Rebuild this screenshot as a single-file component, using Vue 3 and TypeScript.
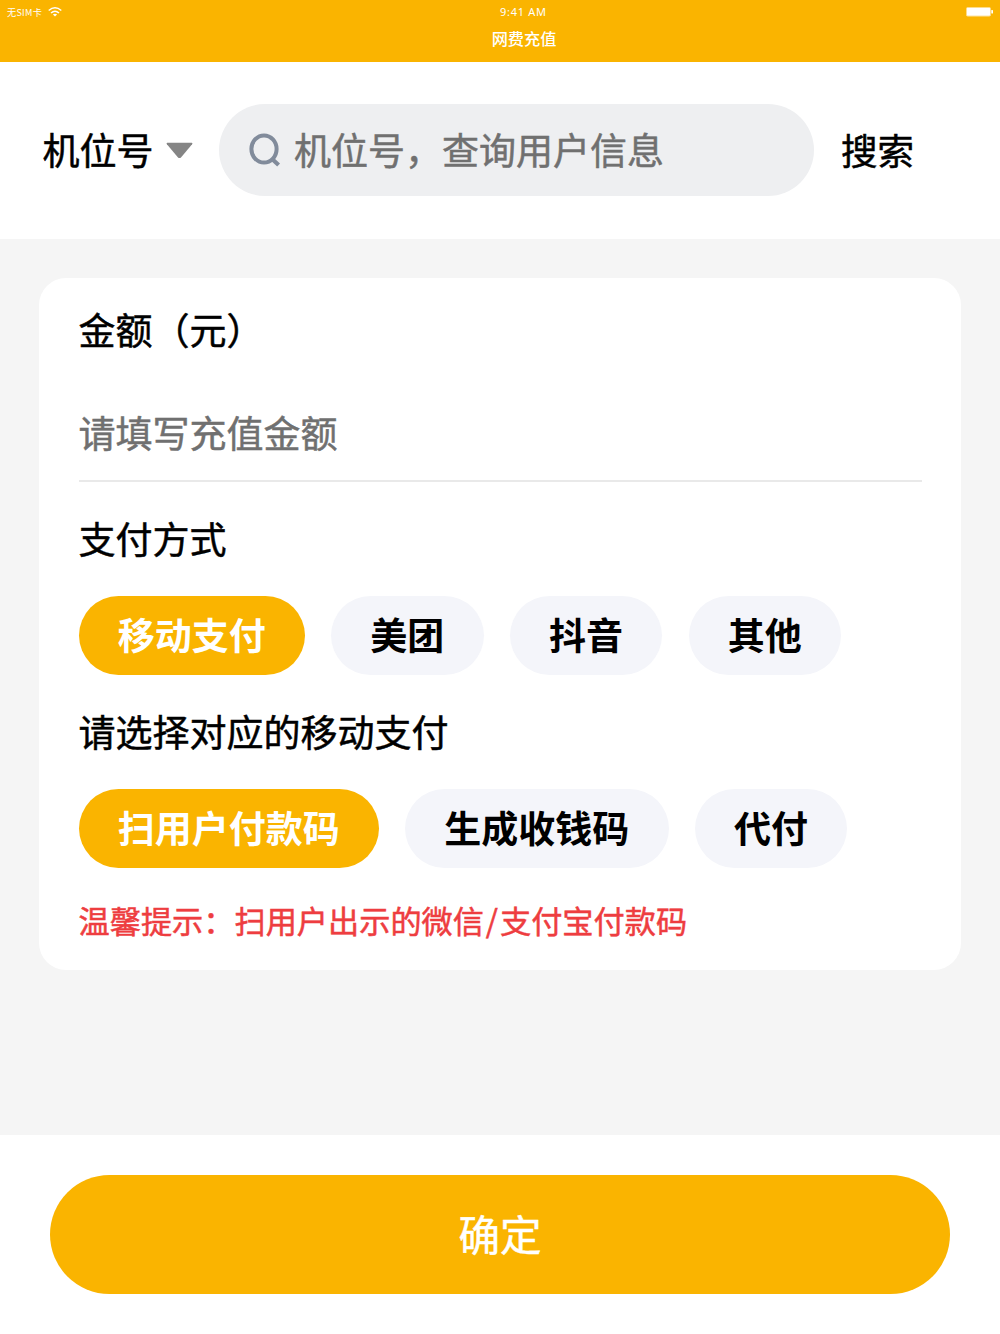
<script setup lang="ts">
import { ref } from 'vue'

const methods: string[] = ['移动支付', '美团', '抖音', '其他']
const channels: string[] = ['扫用户付款码', '生成收钱码', '代付']
const method = ref<string>(methods[0])
const channel = ref<string>(channels[0])
</script>

<template>
  <div class="page">
    <header class="top">
      <div class="status">
        <div class="carrier">
          <span>无SIM卡</span>
          <svg class="wifi" width="14" height="10" viewBox="0 0 14 10" fill="none" stroke="#fff">
            <path d="M0.7 3.5Q7 -1.9 13.3 3.5" stroke-width="1.5" />
            <path d="M3 6Q7 2.5 11 6" stroke-width="1.5" />
            <path d="M4.9 7.5Q7 5.8 9.1 7.5L7 9.6Z" fill="#fff" stroke="none" />
          </svg>
        </div>
        <span class="time">9:41 AM</span>
        <svg class="battery" width="28" height="10" viewBox="0 0 28 10">
          <rect x="0.5" y="0.5" width="24" height="8.6" rx="1.2" fill="#fff" stroke="#fddc8b" />
          <rect x="25.3" y="3" width="1.7" height="3.6" rx="0.6" fill="#fff" />
        </svg>
      </div>
      <h1 class="title">网费充值</h1>
    </header>

    <section class="search">
      <span class="kind">机位号</span>
      <svg class="caret" width="27" height="17" viewBox="0 0 27 17">
        <path d="M1.2 0.7H25.8Q27 1 26.1 2.2L15.2 15.2Q13.5 17 11.8 15.2L0.9 2.2Q0 1 1.2 0.7Z" fill="#858585" />
      </svg>
      <div class="field">
        <svg class="glass" width="32" height="36" viewBox="0 0 32 36" fill="none" stroke="#818b9b">
          <ellipse cx="15" cy="17" rx="12.6" ry="13.6" stroke-width="4" />
          <path d="M22.8 26.8L29.6 33" stroke-width="4.2" />
        </svg>
        <span class="placeholder">机位号，查询用户信息</span>
      </div>
      <span class="go">搜索</span>
    </section>

    <main class="body">
      <div class="card">
        <div class="label">金额（元）</div>
        <div class="amount">请填写充值金额</div>
        <div class="label way">支付方式</div>
        <div class="pills">
          <button
            v-for="m in methods"
            :key="m"
            class="pill"
            :class="{ on: m === method }"
            @click="method = m"
          >{{ m }}</button>
        </div>
        <div class="label sub">请选择对应的移动支付</div>
        <div class="pills">
          <button
            v-for="c in channels"
            :key="c"
            class="pill"
            :class="{ on: c === channel }"
            @click="channel = c"
          >{{ c }}</button>
        </div>
        <p class="hint">温馨提示：扫用户出示的微信<span class="slash">/</span>支付宝付款码</p>
      </div>
    </main>

    <footer class="bottom">
      <button class="confirm">确定</button>
    </footer>
  </div>
</template>

<style>
body {
  margin: 0;
  background: #fff;
}
</style>

<style scoped>
.page {
  width: 1000px;
  height: 1334px;
  display: flex;
  flex-direction: column;
  overflow: hidden;
  background: #fff;
  color: #000;
  font-family: 'Noto Sans CJK SC', sans-serif;
  font-size: 37px;
  font-weight: 400;
  white-space: nowrap;
}
button {
  border: 0;
  margin: 0;
  font-family: inherit;
  white-space: nowrap;
}
.label,
.amount,
.hint,
.placeholder,
.go,
.kind,
.confirm {
  -webkit-text-stroke: 0.5px currentColor;
}
.top {
  box-sizing: border-box;
  height: 61.5px;
  flex: none;
  background: #fab400;
  color: #fff;
}
.status {
  height: 24px;
  display: grid;
  grid-template-columns: 1fr auto 1fr;
  align-items: center;
  padding: 0 6px 0 7px;
}
.carrier {
  display: flex;
  align-items: center;
  gap: 6px;
  font-size: 9.1px;
  line-height: 24px;
  letter-spacing: 0.3px;
}
.time {
  width: 46px;
  margin-left: 45px;
  font-family: 'Noto Sans', sans-serif;
  font-size: 11px;
  line-height: 24px;
  letter-spacing: 0.7px;
}
.battery {
  justify-self: end;
}
.title {
  margin: 0 0 0 48px;
  height: 29px;
  font-size: 16.2px;
  font-weight: 500;
  line-height: 28px;
  text-align: center;
}
.search {
  box-sizing: border-box;
  height: 177px;
  flex: none;
  display: flex;
  align-items: center;
  padding: 0 42px;
}
.kind {
  box-sizing: border-box;
  width: 111px;
  padding: 0 0 2px 0.6px;
}
.caret {
  margin: 0 26px 0 13px;
}
.field {
  box-sizing: border-box;
  width: 595px;
  height: 92.5px;
  display: flex;
  align-items: center;
  gap: 13px;
  padding-left: 30px;
  margin-right: 27px;
  border-radius: 47px;
  background: #eeeff1;
  color: #707070;
}
.placeholder {
  padding-bottom: 2px;
}
.go {
  padding-bottom: 2px;
  font-size: 36.5px;
}
.body {
  box-sizing: border-box;
  height: 896.5px;
  flex: none;
  padding: 39px 39px 0;
  background: #f5f5f5;
}
.card {
  box-sizing: border-box;
  height: 692px;
  padding: 24px 39.5px 0;
  border-radius: 27px;
  background: #fff;
}
.label {
  height: 54px;
  line-height: 54px;
}
.amount {
  box-sizing: border-box;
  height: 78px;
  margin-top: 48px;
  border-bottom: 2px solid #e9e9e9;
  line-height: 57px;
  color: #707070;
}
.way {
  margin: 29px 0 31.5px;
}
.pills {
  display: flex;
  gap: 26.3px;
}
.pill {
  box-sizing: border-box;
  height: 78.5px;
  padding: 0 39.2px 1.5px;
  border-radius: 40px;
  background: #f4f5fa;
  color: #000;
  font-size: 37px;
  font-weight: 700;
  line-height: 77px;
}
.pill.on {
  background: #fab400;
  color: #fff;
}
.sub {
  margin: 29px 0 31.5px;
}
.hint {
  margin: 29px 0 0;
  height: 46px;
  font-size: 31.2px;
  line-height: 46px;
  color: #ee3d40;
}
.slash {
  display: inline-block;
  width: 16px;
  text-align: center;
}
.bottom {
  flex: 1;
  display: flex;
  justify-content: center;
  align-items: flex-start;
  padding-top: 39.5px;
}
.confirm {
  box-sizing: border-box;
  width: 900px;
  height: 119px;
  padding: 0 0 3px;
  border-radius: 60px;
  background: #fab400;
  color: #fff;
  font-size: 41.5px;
  font-weight: 400;
  line-height: 116px;
}
</style>
